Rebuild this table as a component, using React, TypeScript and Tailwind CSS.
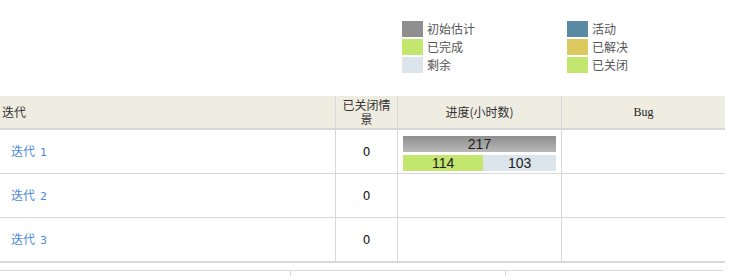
const legend = [
  { color: "bg-[#8f8f8f]", label: "初始估计" },
  { color: "bg-[#5a8aa3]", label: "活动" },
  { color: "bg-[#c3e66e]", label: "已完成" },
  { color: "bg-[#dcc960]", label: "已解决" },
  { color: "bg-[#dde5ec]", label: "剩余" },
  { color: "bg-[#c3e66e]", label: "已关闭" },
];

const rows = [
  { name: "迭代", no: 1, closed: 0, progress: { total: 217, done: 114, left: 103 } },
  { name: "迭代", no: 2, closed: 0 },
  { name: "迭代", no: 3, closed: 0 },
];

const cjk = "font-['Noto_Sans_CJK_SC',sans-serif]";

export default function App() {
  return (
    <div className={`w-[729px] h-[276px] bg-white overflow-hidden text-[12px] ${cjk}`}>
      {/* 图例 */}
      <div className="pt-[21px] pl-[402px] grid grid-cols-[165px_140px] gap-y-[2px]">
        {legend.map((item, i) => (
          <div key={i} className="flex items-center h-[16px]">
            <span className={`w-[21px] h-[16px] ${item.color}`} />
            <span className="ml-[4px] text-[#555] leading-[16px]">{item.label}</span>
          </div>
        ))}
      </div>

      {/* 表格 */}
      <div className="mt-[23px] w-[725px]">
        <div className="grid grid-cols-[335px_62px_164px_164px] h-[34px] bg-[#efede1] border-b-[2px] border-[#d6d6d6] text-[#333]">
          <div className="flex items-center pl-[2px]">迭代</div>
          <div className="flex items-center justify-center text-center leading-[14px] px-[3px] border-l border-[#d8d8d8]">
            已关闭情景
          </div>
          <div className="flex items-center justify-center border-l border-[#d8d8d8]">进度(小时数)</div>
          <div className="flex items-center justify-center border-l border-[#d8d8d8] font-['Liberation_Serif',serif] text-[12px] text-[#222]">
            Bug
          </div>
        </div>

        {rows.map((row, i) => (
          <div
            key={i}
            className={`grid grid-cols-[335px_62px_164px_164px] h-[44px] ${
              i === rows.length - 1 ? "border-b-[2px] h-[45px]" : "border-b"
            } border-[#d8d8d8]`}
          >
            <div className="flex items-center pl-[11px] text-[#4a8ad8]">
              <span>
                {row.name}
                <span className="ml-[5px] font-['DejaVu_Sans',sans-serif] text-[11px]">{row.no}</span>
              </span>
            </div>
            <div className="flex items-center justify-center border-l border-[#d8d8d8] font-['DejaVu_Sans',sans-serif] text-[12px] text-[#111]">
              {row.closed}
            </div>
            <div className="border-l border-[#d8d8d8] px-[5px] pt-[6px]">
              {row.progress && (
                <div className="flex flex-col gap-[3px] font-['Liberation_Sans',sans-serif] text-[14px] text-[#222]">
                  <div className="h-[16px] flex items-center justify-center bg-gradient-to-b from-[#8e8e8e] to-[#b9b9b9]">
                    {row.progress.total}
                  </div>
                  <div className="h-[16px] flex">
                    <div
                      className="flex items-center justify-center bg-[#c3e66e]"
                      style={{ width: `${(row.progress.done / row.progress.total) * 100}%` }}
                    >
                      {row.progress.done}
                    </div>
                    <div className="flex-1 flex items-center justify-center bg-[#dde5ec]">{row.progress.left}</div>
                  </div>
                </div>
              )}
            </div>
            <div className="border-l border-[#d8d8d8]" />
          </div>
        ))}

        {/* 下方表格的顶部 */}
        <div className="mt-[7px] grid grid-cols-[290px_215px_218px] w-[723px] h-[20px] border-t border-[#d8d8d8]">
          <div />
          <div className="border-l border-[#d8d8d8]" />
          <div className="border-l border-[#d8d8d8]" />
        </div>
      </div>
    </div>
  );
}
